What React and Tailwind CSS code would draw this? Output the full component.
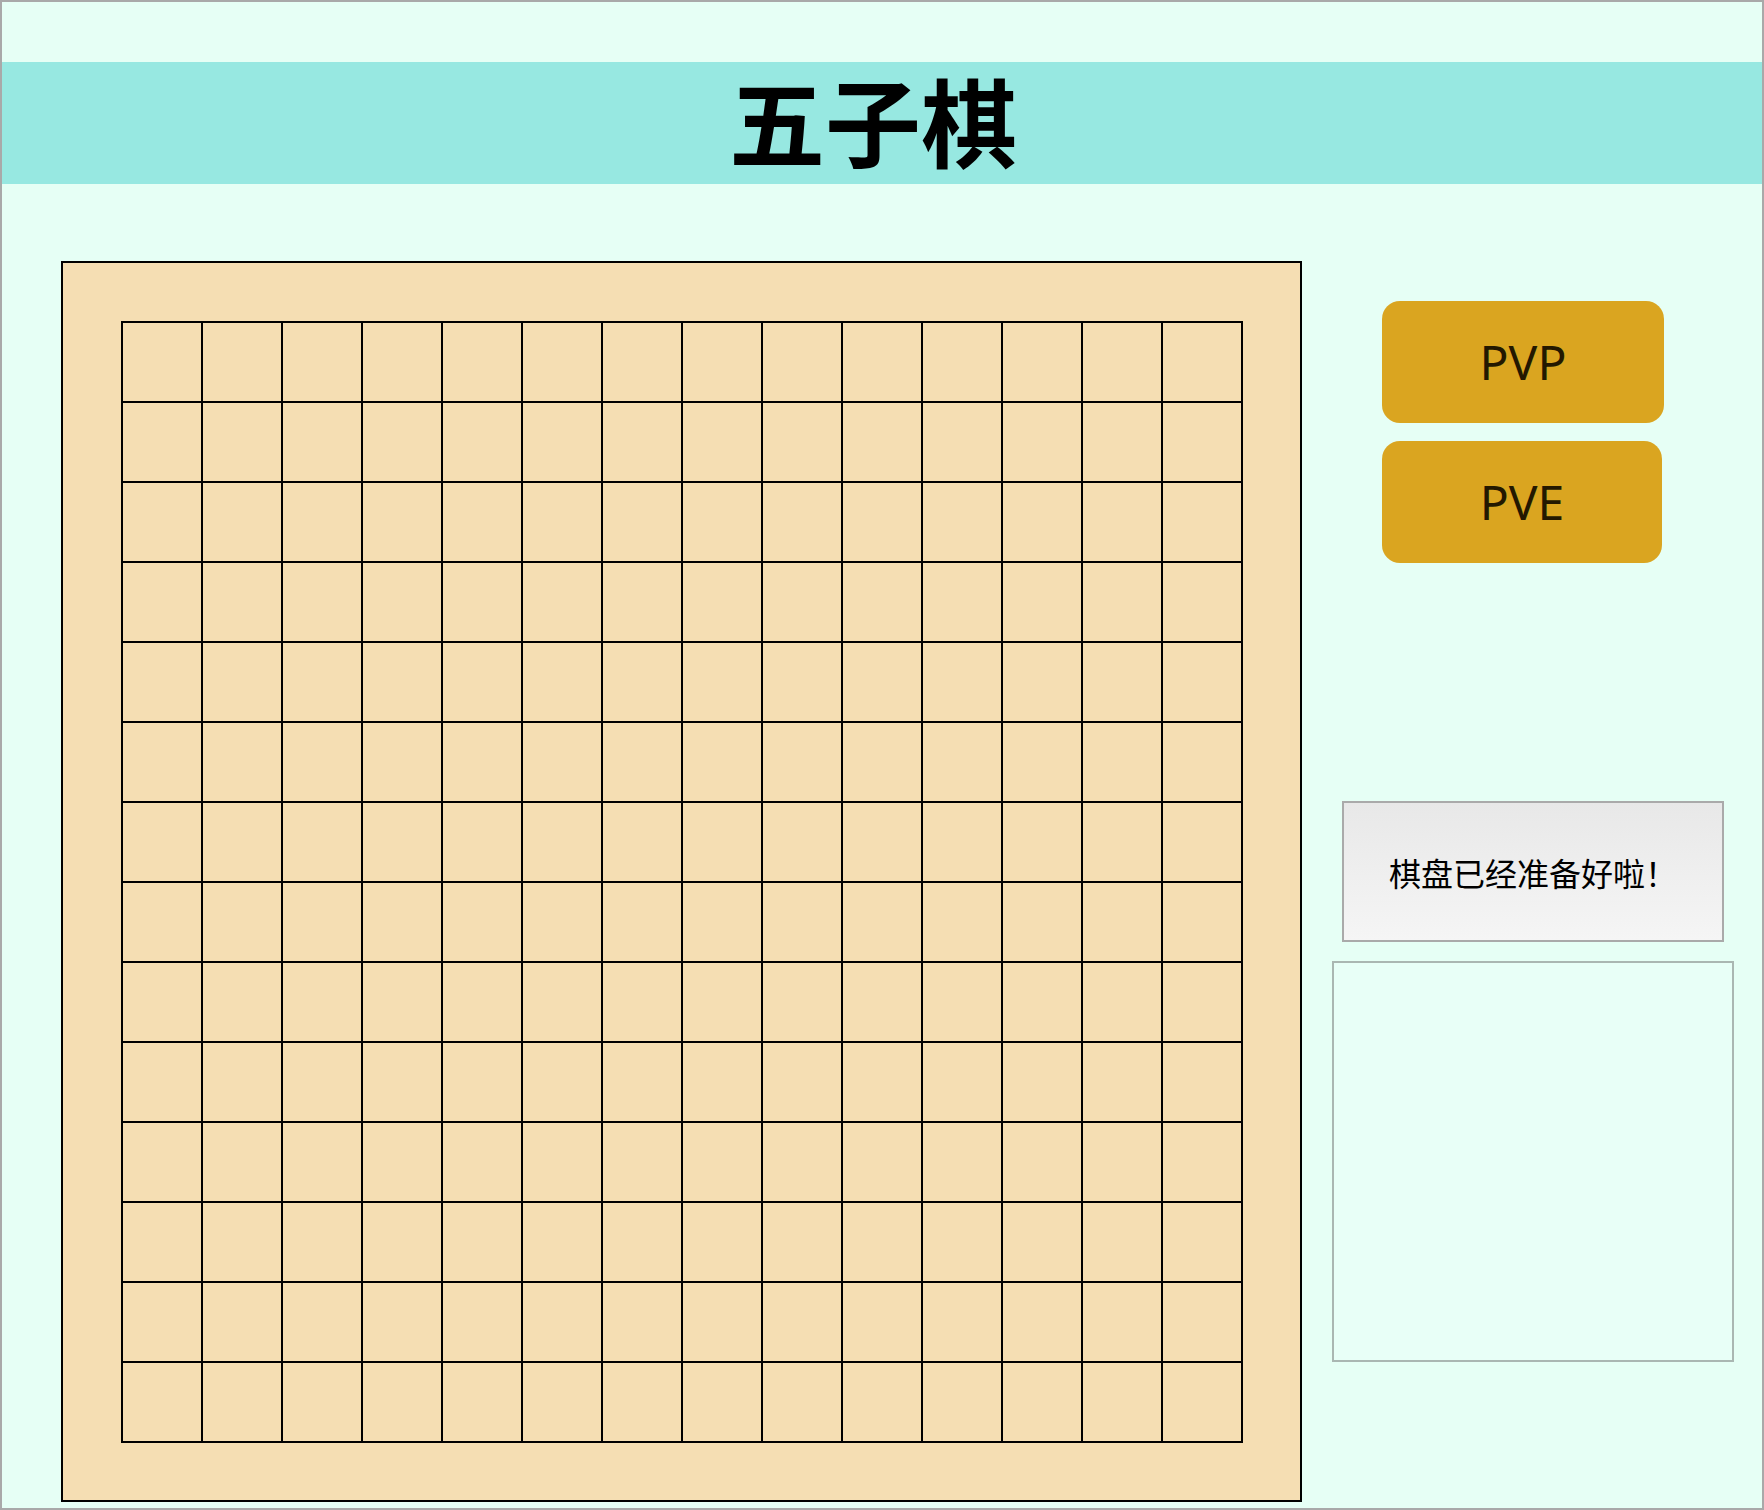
import React from "react";

const SIZE = 14;
const CELL = 80;

function Board() {
  const lines = [];
  for (let i = 0; i <= SIZE; i++) {
    const p = 1 + i * CELL;
    lines.push(<line key={"h" + i} x1={0} y1={p} x2={SIZE * CELL + 2} y2={p} />);
    lines.push(<line key={"v" + i} x1={p} y1={0} x2={p} y2={SIZE * CELL + 2} />);
  }

  return (
    <div className="w-[1241px] h-[1241px] shrink-0 border-2 border-black bg-[#f5deb3] p-[58px]">
      <svg width={SIZE * CELL + 2} height={SIZE * CELL + 2} stroke="#000" strokeWidth="2">
        {lines}
      </svg>
    </div>
  );
}

export default function App() {
  return (
    <div className="w-[1764px] h-[1510px] overflow-hidden border-2 border-[#a9a9a9] bg-[#e6fff5] font-['Noto_Sans','Noto_Sans_CJK_SC',sans-serif]">
      {/* header */}
      <div className="mt-[60px] h-[122px] bg-[#97e8e1] flex items-center justify-center pr-[18px] pb-[8px]">
        <h1 className="text-[96px] leading-none font-semibold text-black font-['Noto_Sans_CJK_SC',sans-serif]">
          五子棋
        </h1>
      </div>

      <div className="flex mt-[77px] pl-[59px]">
        <Board />

        {/* side panel */}
        <div className="flex flex-col">
          <button className="ml-[80px] mt-[40px] w-[282px] h-[122px] rounded-[18px] bg-[#daa520] text-[48px] text-[#231800]">
            PVP
          </button>
          <button className="ml-[80px] mt-[18px] w-[280px] h-[122px] rounded-[18px] bg-[#daa520] text-[48px] text-[#231800]">
            PVE
          </button>

          <div className="ml-[40px] mt-[238px] w-[382px] h-[141px] border-2 border-[#aaaaaa] bg-gradient-to-b from-[#e8e8e8] to-[#f5f5f5] flex items-center justify-center">
            <span className="text-[32px] text-black font-['Noto_Sans_CJK_SC',sans-serif]">
              棋盘已经准备好啦！
            </span>
          </div>

          <div className="ml-[30px] mt-[19px] w-[402px] h-[401px] border-2 border-[#aab7b2] bg-[#e8fff7]"></div>
        </div>
      </div>
    </div>
  );
}
